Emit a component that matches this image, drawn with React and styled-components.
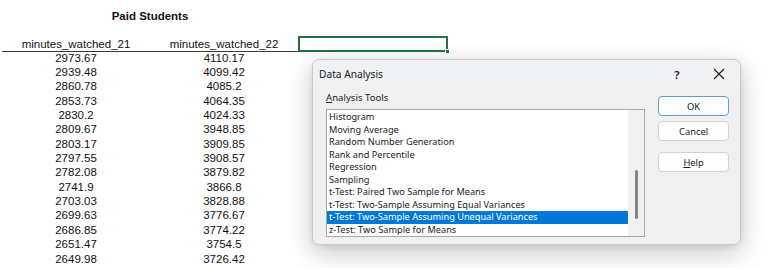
import React from 'react';
import styled, { createGlobalStyle } from 'styled-components';

const GlobalStyle = createGlobalStyle`
  html, body {
    margin: 0;
    padding: 0;
    background: #ffffff;
    overflow: hidden;
  }
`;

const Page = styled.div`
  position: relative;
  width: 784px;
  height: 268px;
  overflow: hidden;
  font-family: 'Liberation Sans', Arial, sans-serif;
  color: #111;
`;

const Sheet = styled.div`
  padding-left: 2px;
  display: flex;
  flex-direction: column;
`;

const SheetTitle = styled.div`
  width: 296px;
  height: 37px;
  padding-top: 9px;
  box-sizing: border-box;
  line-height: 14px;
  text-align: center;
  font-weight: bold;
  font-size: 11.5px;
`;

const Row = styled.div`
  display: grid;
  grid-template-columns: 148px 148px 150px;
`;

const HeaderCell = styled.div`
  height: 15px;
  box-sizing: border-box;
  line-height: 14px;
  text-align: center;
  font-size: 11.5px;
  border-bottom: 1px solid #3a3a3a;
`;

const SelectedCell = styled.div`
  position: relative;
  height: 16px;
  margin-top: -1px;
  box-sizing: border-box;
  border: 2px solid #217346;
`;

const FillHandle = styled.span`
  position: absolute;
  right: -4px;
  bottom: -4px;
  width: 5px;
  height: 5px;
  background: #217346;
  border: 1px solid #fff;
  box-sizing: border-box;
`;

const DataBody = styled.div`
  margin-top: -1.5px;
`;

const DataCell = styled.div`
  height: 14.36px;
  line-height: 14.36px;
  text-align: center;
  font-size: 11.5px;
`;

const Dialog = styled.div`
  position: absolute;
  left: 312px;
  top: 59px;
  width: 429px;
  height: 186px;
  box-sizing: border-box;
  background: #f0f0f0;
  border: 1px solid #c9c9c9;
  border-radius: 7px;
  box-shadow: 0 8px 26px rgba(0, 0, 0, 0.22), 0 2px 6px rgba(0, 0, 0, 0.08);
  font-family: 'Noto Sans', 'Open Sans', sans-serif;
  color: #1a1a1a;
  display: flex;
  flex-direction: column;
`;

const TitleBar = styled.div`
  height: 28px;
  display: flex;
  align-items: center;
  padding-left: 6px;
  background: #f1f2f4;
  border-radius: 7px 7px 0 0;
`;

const TitleText = styled.div`
  flex: 1;
  font-size: 10.2px;
`;

const TitleButton = styled.div`
  width: 42px;
  height: 28px;
  display: flex;
  align-items: center;
  justify-content: center;
  font-size: 11.5px;
  font-weight: ${(p) => (p.$bold ? 600 : 400)};
`;

const DialogBody = styled.div`
  display: flex;
  gap: 13px;
  padding: 3px 11px 0 13px;
`;

const LeftColumn = styled.div`
  width: 320px;
  display: flex;
  flex-direction: column;
`;

const FieldLabel = styled.div`
  height: 14px;
  line-height: 14px;
  font-size: 9.6px;
  margin-bottom: 4px;
  color: #222;
`;

const Key = styled.span`
  text-decoration: underline;
`;

const ListBox = styled.div`
  height: 128px;
  box-sizing: border-box;
  border: 1px solid #a8a8a8;
  background: #fff;
  display: flex;
`;

const Items = styled.div`
  flex: 1;
  padding-top: 1px;
`;

const Item = styled.div`
  height: 12.5px;
  line-height: 12.5px;
  padding-left: 2px;
  font-size: 9.2px;
  white-space: nowrap;
  background: ${(p) => (p.$selected ? '#0078d7' : 'transparent')};
  color: ${(p) => (p.$selected ? '#fff' : '#1a1a1a')};
`;

const ScrollTrack = styled.div`
  width: 16px;
  background: #f0f0f0;
  display: flex;
  justify-content: center;
  padding-top: 60px;
  box-sizing: border-box;
`;

const ScrollThumb = styled.div`
  width: 3px;
  height: 49px;
  border-radius: 2px;
  background: #858585;
`;

const RightColumn = styled.div`
  width: 71px;
  display: flex;
  flex-direction: column;
  padding-top: 5px;
`;

const Button = styled.div`
  height: 20px;
  box-sizing: border-box;
  display: flex;
  align-items: center;
  justify-content: center;
  font-size: 9.4px;
  background: #fdfdfd;
  border: 1px solid ${(p) => (p.$primary ? '#5a9fdc' : '#d3d3d3')};
  border-radius: 4px;
  margin-bottom: ${(p) => p.$gap}px;
`;

const rows = [
  ['2973.67', '4110.17'],
  ['2939.48', '4099.42'],
  ['2860.78', '4085.2'],
  ['2853.73', '4064.35'],
  ['2830.2', '4024.33'],
  ['2809.67', '3948.85'],
  ['2803.17', '3909.85'],
  ['2797.55', '3908.57'],
  ['2782.08', '3879.82'],
  ['2741.9', '3866.8'],
  ['2703.03', '3828.88'],
  ['2699.63', '3776.67'],
  ['2686.85', '3774.22'],
  ['2651.47', '3754.5'],
  ['2649.98', '3726.42'],
];

const tools = [
  'Histogram',
  'Moving Average',
  'Random Number Generation',
  'Rank and Percentile',
  'Regression',
  'Sampling',
  't-Test: Paired Two Sample for Means',
  't-Test: Two-Sample Assuming Equal Variances',
  't-Test: Two-Sample Assuming Unequal Variances',
  'z-Test: Two Sample for Means',
];

const CloseIcon = () => (
  <svg width="12" height="12" viewBox="0 0 12 12">
    <path d="M1 1 L11 11 M11 1 L1 11" stroke="#1a1a1a" strokeWidth="1.1" fill="none" />
  </svg>
);

export default function App() {
  return (
    <Page>
      <GlobalStyle />
      <Sheet>
        <SheetTitle>Paid Students</SheetTitle>
        <Row>
          <HeaderCell>minutes_watched_21</HeaderCell>
          <HeaderCell>minutes_watched_22</HeaderCell>
          <SelectedCell>
            <FillHandle />
          </SelectedCell>
        </Row>
        <DataBody>
          {rows.map(([a, b]) => (
            <Row key={a}>
              <DataCell>{a}</DataCell>
              <DataCell>{b}</DataCell>
            </Row>
          ))}
        </DataBody>
      </Sheet>

      <Dialog>
        <TitleBar>
          <TitleText>Data Analysis</TitleText>
          <TitleButton $bold>?</TitleButton>
          <TitleButton>
            <CloseIcon />
          </TitleButton>
        </TitleBar>
        <DialogBody>
          <LeftColumn>
            <FieldLabel>
              <Key>A</Key>nalysis Tools
            </FieldLabel>
            <ListBox>
              <Items>
                {tools.map((t, i) => (
                  <Item key={t} $selected={i === 8}>
                    {t}
                  </Item>
                ))}
              </Items>
              <ScrollTrack>
                <ScrollThumb />
              </ScrollTrack>
            </ListBox>
          </LeftColumn>
          <RightColumn>
            <Button $primary $gap={5}>OK</Button>
            <Button $gap={11}>Cancel</Button>
            <Button $gap={0}>
              <span>
                <Key>H</Key>elp
              </span>
            </Button>
          </RightColumn>
        </DialogBody>
      </Dialog>
    </Page>
  );
}
